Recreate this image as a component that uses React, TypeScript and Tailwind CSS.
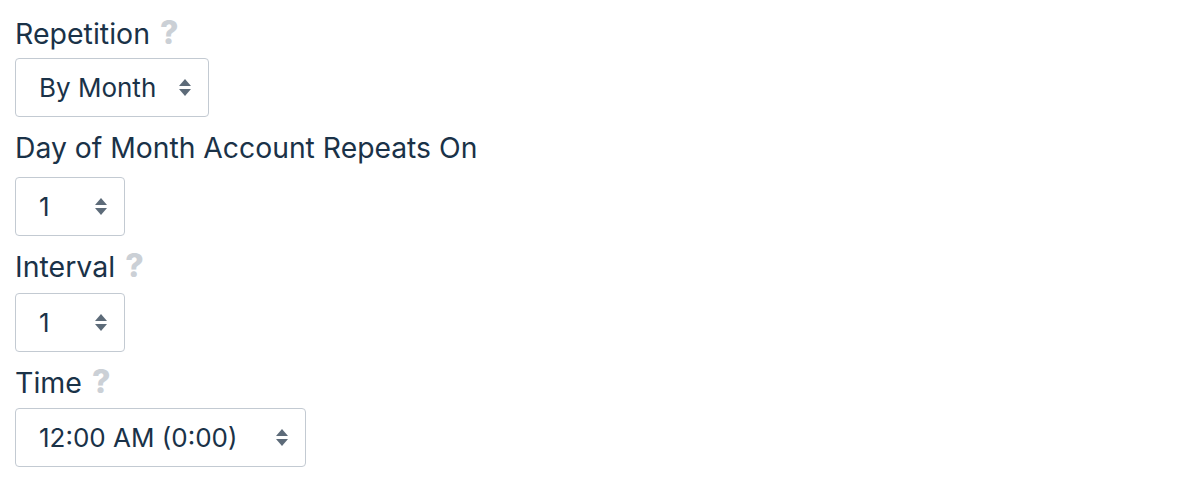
import React from "react";

const font = { fontFamily: "Inter, 'Noto Sans', sans-serif" };

function Help() {
  return <span className="ml-[10px] text-[32px] font-extrabold text-[#cbd0d6]">?</span>;
}

function Arrows() {
  return (
    <svg width="12" height="17" viewBox="0 0 12 17" className="shrink-0">
      <path d="M6 0 L12 7 L0 7 Z" fill="#5d6b79" />
      <path d="M0 10 L12 10 L6 17 Z" fill="#5d6b79" />
    </svg>
  );
}

function Select({ value, width }: { value: string; width: string }) {
  return (
    <div
      className={`${width} h-[59px] flex items-center justify-between pl-[23px] pr-[17px] border border-[#c3cad2] rounded-[4px] bg-white text-[26px] text-[#1a3248]`}
    >
      <span>{value}</span>
      <Arrows />
    </div>
  );
}

export default function App() {
  return (
    <div className="bg-white min-h-[480px] px-[15px] pt-[15px]" style={font}>
      <div className="h-[36px] text-[28.5px] leading-[36px] text-[#1a3248]">
        Repetition
        <Help />
      </div>
      <div className="mt-[7px]">
        <Select value="By Month" width="w-[194px]" />
      </div>

      <div className="mt-[13px] h-[36px] text-[28.3px] leading-[36px] text-[#1a3248]">
        Day of Month Account Repeats On
      </div>
      <div className="mt-[11px]">
        <Select value="1" width="w-[110px]" />
      </div>

      <div className="mt-[12px] h-[36px] text-[28.5px] leading-[36px] text-[#1a3248]">
        Interval
        <Help />
      </div>
      <div className="mt-[9px]">
        <Select value="1" width="w-[110px]" />
      </div>

      <div className="mt-[12px] h-[36px] text-[28.5px] leading-[36px] text-[#1a3248]">
        Time
        <Help />
      </div>
      <div className="mt-[8px]">
        <Select value="12:00 AM (0:00)" width="w-[291px]" />
      </div>
    </div>
  );
}
